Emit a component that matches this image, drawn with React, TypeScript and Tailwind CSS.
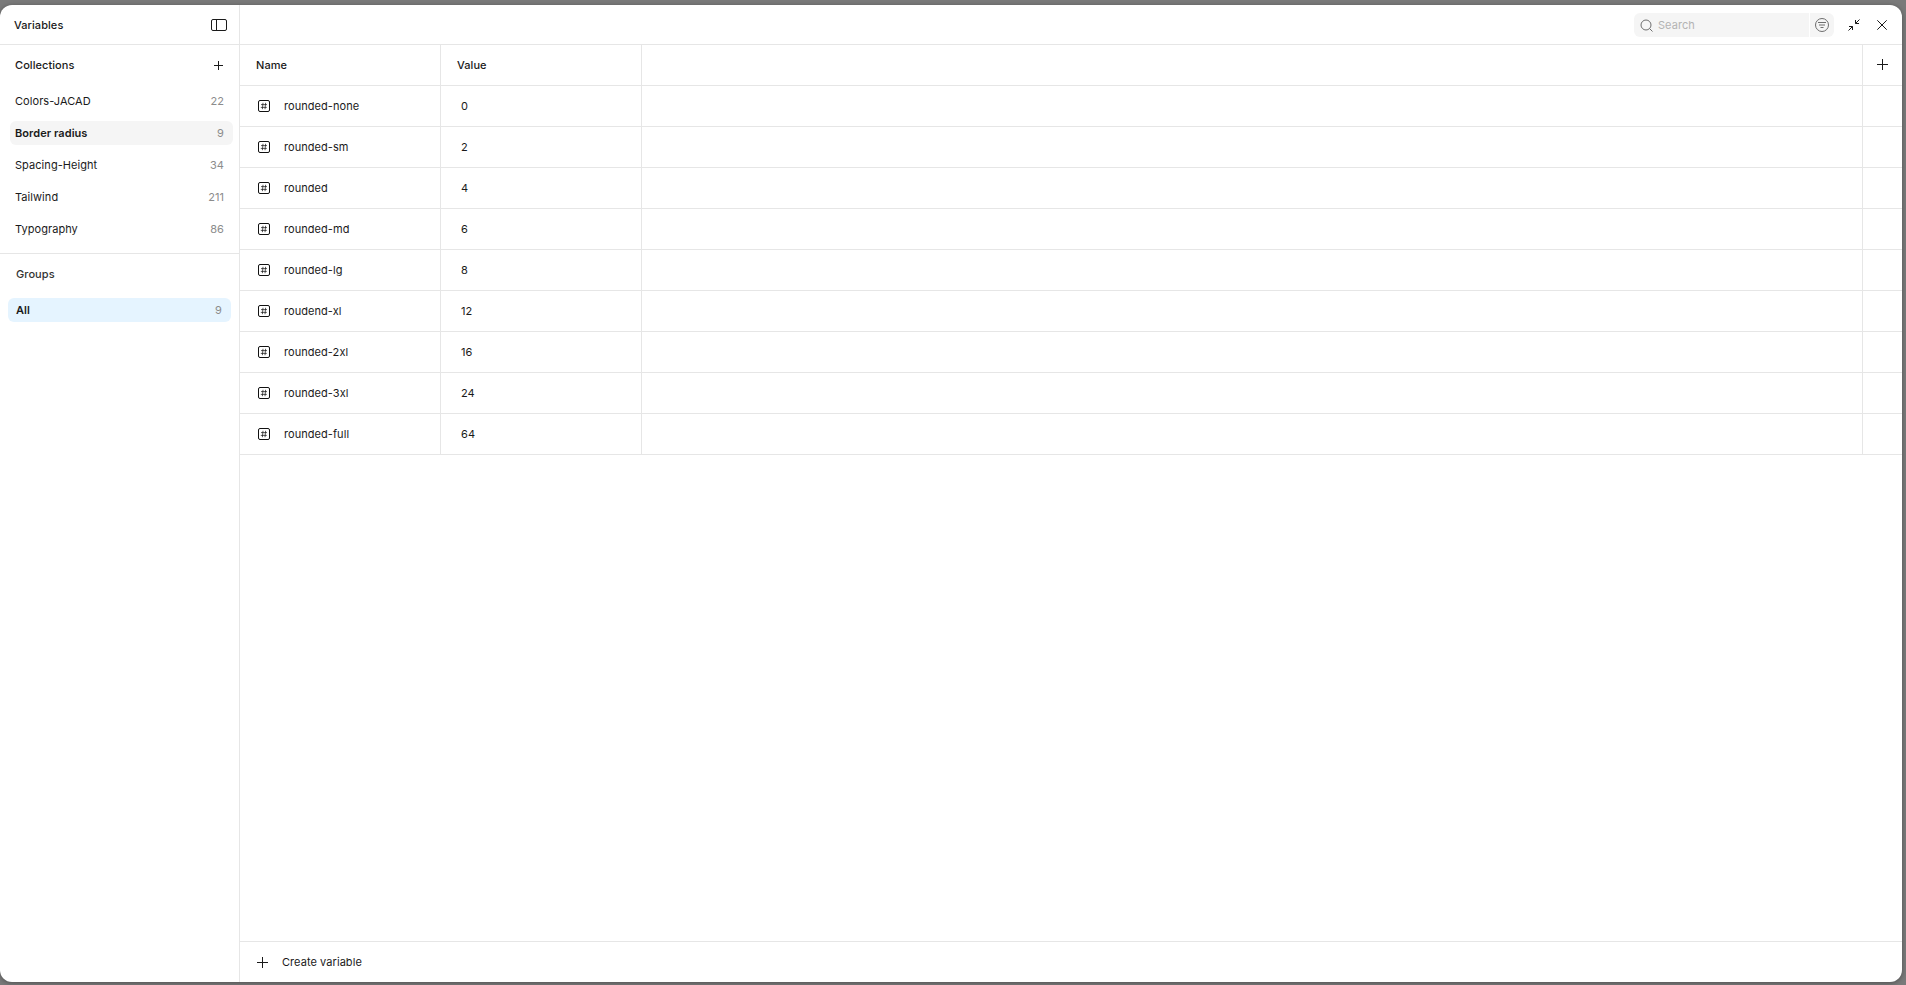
import React from "react";

const collections = [
  { name: "Colors-JACAD", count: 22 },
  { name: "Border radius", count: 9, active: true },
  { name: "Spacing-Height", count: 34 },
  { name: "Tailwind", count: 211 },
  { name: "Typography", count: 86 },
];

const variables = [
  { name: "rounded-none", value: 0 },
  { name: "rounded-sm", value: 2 },
  { name: "rounded", value: 4 },
  { name: "rounded-md", value: 6 },
  { name: "rounded-lg", value: 8 },
  { name: "roudend-xl", value: 12 },
  { name: "rounded-2xl", value: 16 },
  { name: "rounded-3xl", value: 24 },
  { name: "rounded-full", value: 64 },
];

const PlusIcon = ({ size = 11 }: { size?: number }) => (
  <svg width={size} height={size} viewBox={`0 0 ${size} ${size}`} fill="none" stroke="#1a1a1a" strokeWidth="1">
    <path d={`M${size / 2} 0v${size}M0 ${size / 2}h${size}`} />
  </svg>
);

const NumberIcon = () => (
  <svg width="12" height="12" viewBox="0 0 12 12" fill="none" stroke="#111111">
    <rect x="0.5" y="0.5" width="11" height="11" rx="1.5" strokeWidth="1" />
    <path d="M5 2.8l-.6 6.4M7.6 2.8L7 9.2M3 4.6h6M2.8 7.4h6" strokeWidth="0.7" />
  </svg>
);

export default function App() {
  return (
    <div className="flex h-[985px] w-[1906px] bg-[#7a7a7a] pt-[5px] pr-[4px] pb-[3px] font-['Inter',sans-serif] text-[11px] tracking-[0.06px] text-[#1a1a1a]">
      <div className="flex flex-1 overflow-hidden rounded-xl bg-white shadow-[0_1px_5px_rgba(0,0,0,0.35)]">
        <aside className="flex w-[240px] shrink-0 flex-col border-r border-[#e6e6e6]">
          <div className="flex h-[40px] shrink-0 items-center justify-between border-b border-[#e6e6e6] pt-[1px] pr-[12px] pl-[14px]">
            <span className="font-medium">Variables</span>
            <svg width="16" height="12" viewBox="0 0 16 12" fill="none" stroke="#1a1a1a" strokeWidth="1">
              <rect x="0.5" y="0.5" width="15" height="11" rx="1.5" />
              <path d="M5.5 0.5v11" />
            </svg>
          </div>

          <div className="flex h-[41px] shrink-0 items-center justify-between pr-[16px] pl-[15px]">
            <span className="font-medium">Collections</span>
            <PlusIcon size={9} />
          </div>

          <div className="flex flex-col gap-[8px] border-b border-[#e6e6e6] pt-[3px] pr-[6px] pb-[12px] pl-[10px]">
            {collections.map((c) => (
              <div
                key={c.name}
                className={`flex h-[24px] items-center justify-between rounded-md pr-[9px] pl-[5px] ${c.active ? "bg-[#f5f5f5] font-semibold" : ""}`}
              >
                <span>{c.name}</span>
                <span className="font-normal text-[#8c8c8c]">{c.count}</span>
              </div>
            ))}
          </div>

          <div className="mb-[4px] flex h-[40px] shrink-0 items-center pl-[16px]">
            <span className="font-medium text-[#333333]">Groups</span>
          </div>

          <div className="mx-[8px] flex h-[24px] items-center justify-between rounded-md bg-[#e5f4ff] pr-[9px] pl-[8px]">
            <span className="font-semibold">All</span>
            <span className="text-[#8c8c8c]">9</span>
          </div>
        </aside>

        <main className="flex min-w-0 flex-1 flex-col">
          <div className="flex h-[40px] shrink-0 items-center justify-end border-b border-[#e6e6e6] pt-[1px] pr-[15px]">
            <div className="flex h-[24px] w-[200px] items-center overflow-hidden rounded-md bg-[#f5f5f5]">
              <div className="flex flex-1 items-center gap-[5px] pl-[6px]">
                <svg width="13" height="13" viewBox="0 0 13 13" fill="none" stroke="#6e6e6e" strokeWidth="1">
                  <circle cx="6" cy="6" r="5" />
                  <path d="M9.6 9.6l2.9 2.9" />
                </svg>
                <span className="text-[#b3b3b3]">Search</span>
              </div>
              <div className="flex h-full w-[25px] items-center justify-center border-l border-white">
                <svg width="14" height="14" viewBox="0 0 14 14" fill="none" stroke="#6e6e6e" strokeWidth="1">
                  <circle cx="7" cy="7" r="6.5" />
                  <path d="M3 4.5h8M4 7h6M5.5 9.5h3" />
                </svg>
              </div>
            </div>
            <svg className="ml-[14px]" width="12" height="12" viewBox="0 0 12 12" fill="none" stroke="#1a1a1a" strokeWidth="1">
              <path d="M7.5 4.5l4-4M7.5 1v3.5H11M4.5 7.5l-4 4M1 7.5h3.5V11" />
            </svg>
            <svg className="ml-[17px]" width="10" height="10" viewBox="0 0 10 10" fill="none" stroke="#1a1a1a" strokeWidth="1">
              <path d="M0.3 0.3l9.4 9.4M9.7 0.3l-9.4 9.4" />
            </svg>
          </div>

          <div className="flex h-[41px] shrink-0 border-b border-[#e6e6e6] font-medium">
            <div className="flex w-[201px] items-center border-r border-[#e6e6e6] pl-[16px]">Name</div>
            <div className="flex w-[201px] items-center border-r border-[#e6e6e6] pl-[16px]">Value</div>
            <div className="flex-1 border-r border-[#e6e6e6]" />
            <div className="flex w-[39px] items-center justify-center pb-[1px]">
              <PlusIcon />
            </div>
          </div>

          <div className="flex flex-1 flex-col">
            {variables.map((v) => (
              <div key={v.name} className="flex h-[41px] shrink-0 border-b border-[#e6e6e6]">
                <div className="flex w-[201px] items-center border-r border-[#e6e6e6] pl-[18px]">
                  <NumberIcon />
                  <span className="ml-[14px]">{v.name}</span>
                </div>
                <div className="flex w-[201px] items-center border-r border-[#e6e6e6] pl-[20px]">{v.value}</div>
                <div className="flex-1 border-r border-[#e6e6e6]" />
                <div className="w-[39px]" />
              </div>
            ))}
          </div>

          <div className="flex h-[41px] shrink-0 items-center border-t border-[#e6e6e6] pl-[17px]">
            <PlusIcon />
            <span className="ml-[14px]">Create variable</span>
          </div>
        </main>
      </div>
    </div>
  );
}
